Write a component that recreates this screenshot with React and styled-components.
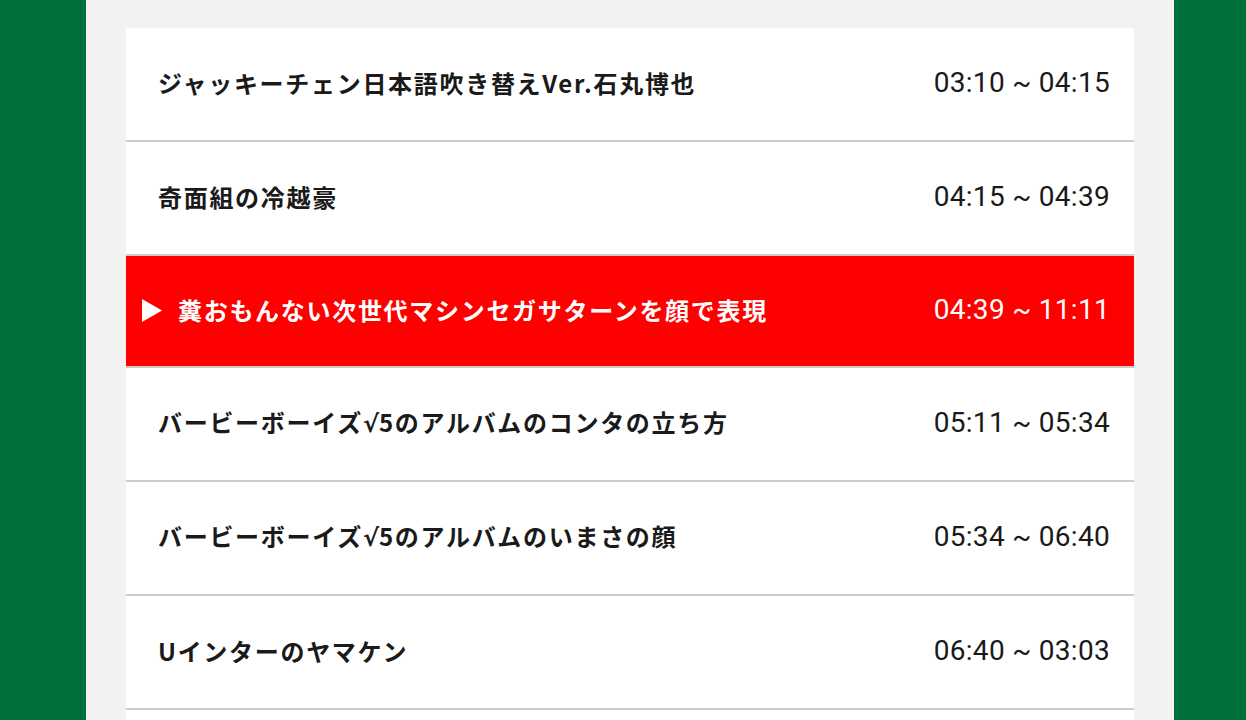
import styled, { createGlobalStyle } from "styled-components";

const GlobalStyle = createGlobalStyle`
  html, body {
    margin: 0;
    padding: 0;
    background-color: #00703a;
  }
  body {
    font-family: "Noto Sans CJK JP", "Noto Sans", sans-serif;
  }
`;

const Page = styled.div`
  min-height: 720px;
  background-color: #00703a;
  display: flex;
  justify-content: flex-start;
  padding-left: 86px;
`;

const Panel = styled.main`
  width: 1088px;
  min-height: 720px;
  background-color: #f2f2f2;
  padding: 28px 40px 0;
  box-sizing: border-box;
`;

const List = styled.ul`
  list-style: none;
  margin: 0;
  padding: 0;
  background-color: #fff;
`;

const Row = styled.li`
  display: flex;
  align-items: center;
  justify-content: space-between;
  box-sizing: border-box;
  height: ${(props) => (props.active ? "112px" : "114px")};
  padding: 0 24px 2px ${(props) => (props.active ? "16px" : "32px")};
  border-bottom: 2px solid #cccccc;
  background-color: ${(props) => (props.active ? "#ff0000" : "#fff")};
  color: ${(props) => (props.active ? "#fff" : "#1a1a1a")};
`;

const TitleWrap = styled.div`
  display: flex;
  align-items: center;
  gap: 16px;
`;

const PlayMark = styled.svg`
  width: 20px;
  height: 23px;
  flex-shrink: 0;
`;

const Title = styled.span`
  font-size: 24px;
  line-height: 32px;
  font-weight: 700;
  letter-spacing: 1.7px;
  white-space: nowrap;
`;

const Root = styled.span`
  font-family: "DejaVu Sans", sans-serif;
  font-weight: 700;
  letter-spacing: 0;
`;

const Time = styled.span`
  font-family: Roboto, "Noto Sans", sans-serif;
  font-size: 28px;
  line-height: 32px;
  font-weight: 400;
  letter-spacing: 0.3px;
  white-space: nowrap;
`;

const items = [
  { title: "ジャッキーチェン日本語吹き替えVer.石丸博也", time: "03:10 ~ 04:15" },
  { title: "奇面組の冷越豪", time: "04:15 ~ 04:39" },
  { title: "糞おもんない次世代マシンセガサターンを顔で表現", time: "04:39 ~ 11:11", active: true },
  { title: "バービーボーイズ√5のアルバムのコンタの立ち方", time: "05:11 ~ 05:34" },
  { title: "バービーボーイズ√5のアルバムのいまさの顔", time: "05:34 ~ 06:40" },
  { title: "Uインターのヤマケン", time: "06:40 ~ 03:03" },
  { title: "", time: "" },
];

const renderTitle = (text) => {
  const parts = text.split("√");
  return parts.map((part, i) => (
    <span key={i}>
      {i > 0 && <Root>√</Root>}
      {part}
    </span>
  ));
};

const App = () => {
  return (
    <>
      <GlobalStyle />
      <Page>
        <Panel>
          <List>
            {items.map((item, i) => (
              <Row key={i} active={item.active}>
                <TitleWrap>
                  {item.active && (
                    <PlayMark viewBox="0 0 20 23">
                      <polygon points="0,0 20,11.5 0,23" fill="#fff" />
                    </PlayMark>
                  )}
                  <Title>{renderTitle(item.title)}</Title>
                </TitleWrap>
                <Time>{item.time}</Time>
              </Row>
            ))}
          </List>
        </Panel>
      </Page>
    </>
  );
};

export default App;
